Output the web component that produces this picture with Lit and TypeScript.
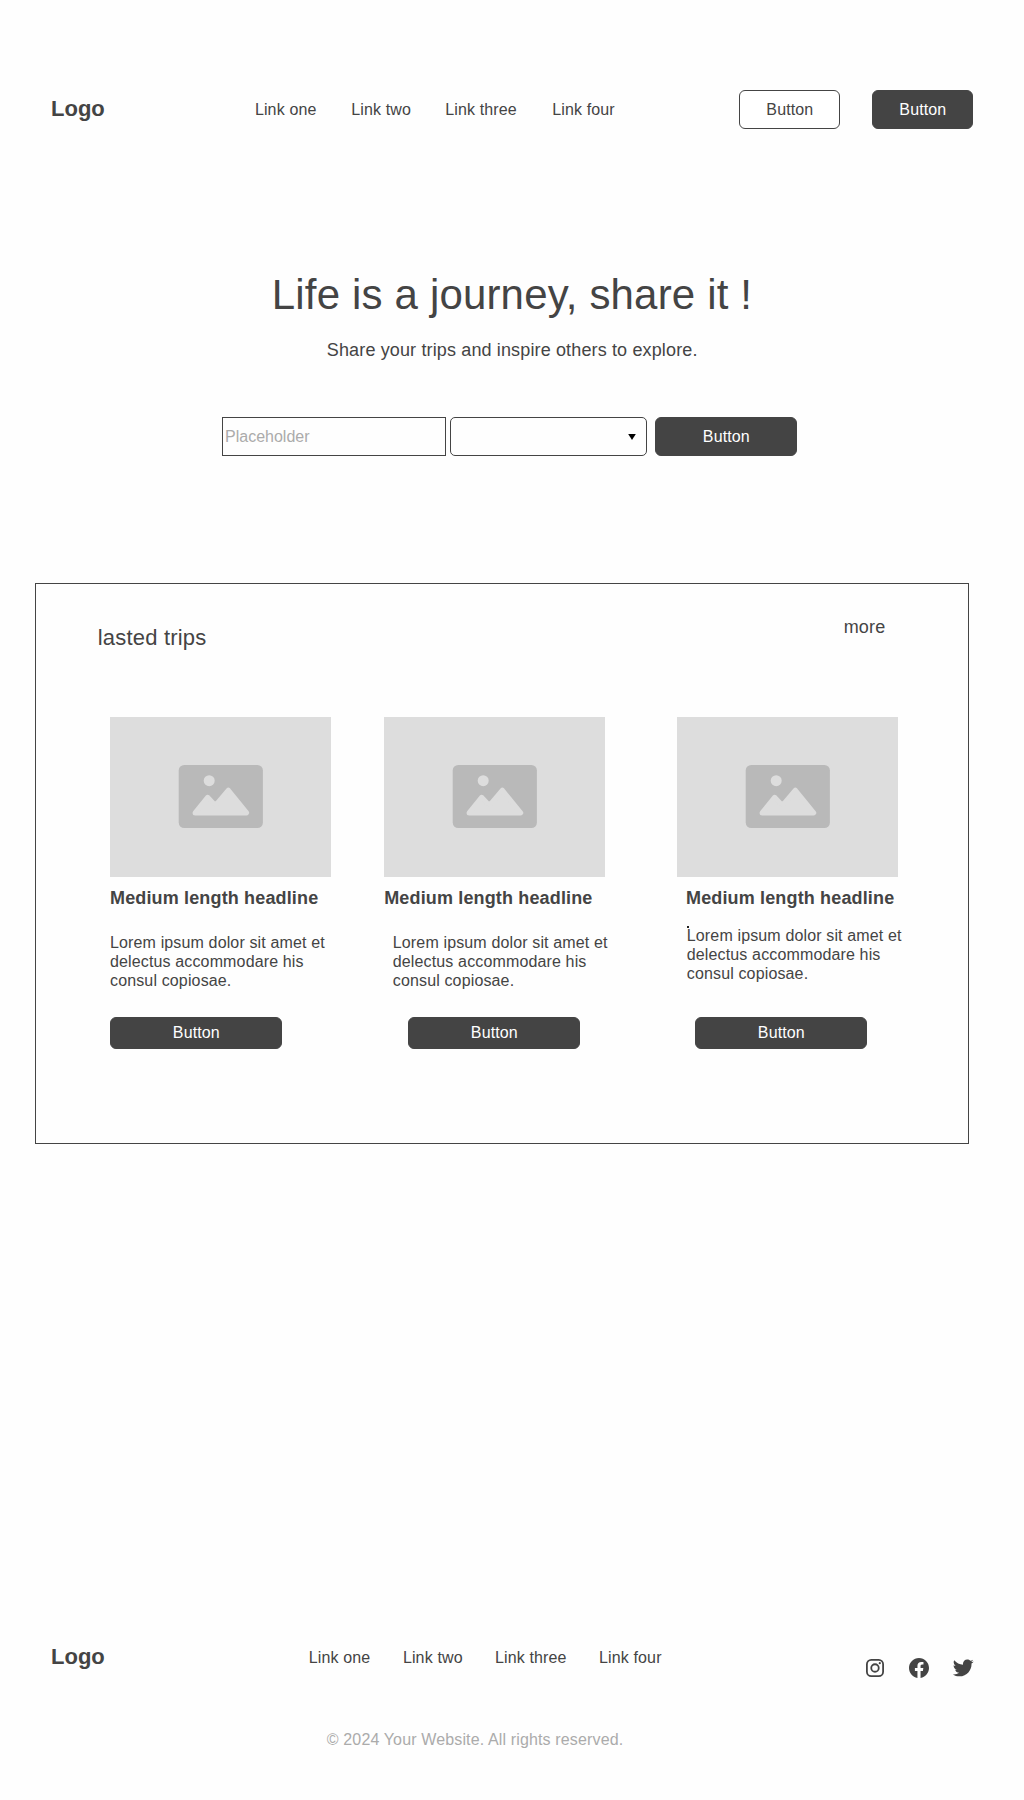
import { LitElement, html, css, svg } from "lit";
import { customElement, property } from "lit/decorators.js";

const ink = css`#444444`;

@customElement("ui-button")
class UiButton extends LitElement {
  @property({ reflect: true }) variant = "solid";

  static styles = css`
    :host { display: block; height: 39px; }
    .btn {
      box-sizing: border-box;
      width: 100%;
      height: 100%;
      display: flex;
      align-items: center;
      justify-content: center;
      margin: 0;
      padding: 0 0 0 0.6px;
      border: 1px solid ${ink};
      border-radius: 6px;
      background: ${ink};
      color: #fff;
      font: 16px/17px "Liberation Sans", Arial, sans-serif;
      letter-spacing: 0.1px;
    }
    :host([variant="outline"]) .btn { background: #fff; color: ${ink}; }
    :host([variant="compact"]) { height: 32px; }
    :host([variant="compact"]) .btn { padding-bottom: 1px; }
  `;

  render() {
    return html`<button class="btn"><slot></slot></button>`;
  }
}

@customElement("image-placeholder")
class ImagePlaceholder extends LitElement {
  static styles = css`
    :host {
      display: flex;
      align-items: center;
      justify-content: center;
      width: 221px;
      height: 160px;
      background: #dddddd;
    }
    .glyph { display: block; width: 85px; height: 63px; margin-top: -1px; }
    .frame { fill: #b9b9b9; }
    .shape { fill: #dddddd; stroke: #dddddd; stroke-width: 5; stroke-linejoin: round; }
    .sun { fill: #dddddd; }
  `;

  render() {
    return html`<svg class="glyph" viewBox="-0.4 0 85 63">
      ${svg`
        <rect class="frame" x="0.3" y="0" width="84.2" height="63" rx="5.5"></rect>
        <circle class="sun" cx="30.8" cy="15.7" r="5.5"></circle>
        <path class="shape" d="M16.7 47.9 L29.2 32.3 L34.8 38.3 Q36.8 39.3 38.8 38.3 L50 25.2 L68.3 47.9 Z"></path>
      `}
    </svg>`;
  }
}

interface Trip {
  kind: string;
  title: string;
  text: string;
}

const trips: Trip[] = ["first", "second", "third"].map((kind) => ({
  kind,
  title: "Medium length headline",
  text: "Lorem ipsum dolor sit amet et delectus accommodare his consul copiosae.",
}));

const links = ["Link one", "Link two", "Link three", "Link four"];

@customElement("app-root")
class AppRoot extends LitElement {
  static styles = css`
    :host {
      display: block;
      box-sizing: border-box;
      width: 1024px;
      height: 1800px;
      overflow: hidden;
      background: #fefefe;
      color: ${ink};
      font: 16px/19px "Liberation Sans", Arial, sans-serif;
      letter-spacing: 0.14px;
    }
    h1, h2, h3, p { margin: 0; font-weight: normal; }
    a { color: inherit; text-decoration: none; }

    .header { display: flex; align-items: flex-start; padding: 90px 51px 0 51px; height: 39px; }
    .logo { font-size: 22px; line-height: 25px; font-weight: bold; letter-spacing: 0; }
    .header .logo { width: 203.9px; margin-top: 6px; }
    .nav { display: grid; }
    .header .nav { grid-template-columns: 96.3px 94px 107px auto; margin-top: 10px; }
    .actions { display: flex; gap: 32px; margin-left: auto; }
    .actions ui-button { width: 101px; }

    .hero { padding-top: 142px; }
    .title { font-size: 42px; line-height: 47px; letter-spacing: 0.17px; padding-left: 271.8px; white-space: nowrap; }
    .subtitle { font-size: 18px; line-height: 20px; padding: 22px 0 0 326.8px; letter-spacing: 0.14px; white-space: nowrap; }
    .search { display: flex; height: 39px; margin: 57px 0 0 222px; }
    .input {
      box-sizing: border-box;
      width: 224px;
      height: 39px;
      padding: 0 2px 0 2px;
      border: 1px solid ${ink};
      border-radius: 0;
      background: #fefefe;
      font: inherit;
      letter-spacing: 0;
    }
    .input::placeholder { color: #ababab; opacity: 1; }
    .select {
      box-sizing: border-box;
      display: flex;
      align-items: center;
      justify-content: flex-end;
      width: 197px;
      margin: 0 8px 0 4px;
      padding-right: 10px;
      border: 1px solid ${ink};
      border-radius: 5px;
      background: #fefefe;
    }
    .caret { display: block; width: 8px; height: 6px; }
    .search ui-button { width: 142px; }

    .panel {
      box-sizing: border-box;
      width: 934px;
      height: 561px;
      margin: 127px 0 0 35px;
      border: 1px solid ${ink};
    }
    .panel-head { display: flex; justify-content: space-between; align-items: flex-start; padding: 33px 82.7px 0 61.7px; height: 100px; }
    .panel-title { font-size: 22px; line-height: 25px; margin-top: 8px; letter-spacing: 0.2px; }
    .more { font-size: 18px; line-height: 20px; }
    .trips { display: grid; grid-template-columns: 274px 293px auto; padding-left: 74px; }
    .trip { display: flex; flex-direction: column; align-items: flex-start; width: 232px; }
    .trip-title { font-size: 18px; line-height: 20px; font-weight: bold; margin: 11px 0 0; white-space: nowrap; letter-spacing: 0.15px; }
    .trip-text { width: 222px; height: 57px; margin: 25px 0 27px; }
    .trip ui-button { width: 172px; }
    .second .trip-title { margin-left: 0.2px; }
    .second .trip-text { margin-left: 8.8px; }
    .second ui-button { margin-left: 24px; }
    .third .trip-title { margin-left: 9px; }
    .third .dot { width: 2px; height: 2px; margin: 18px 0 -2px 10px; background: #222; }
    .third .trip-text { margin: 0 0 34px 9.8px; }
    .third ui-button { margin-left: 18px; }

    .footer { display: flex; align-items: flex-start; padding: 500px 49px 0 51px; }
    .footer .logo { width: 257.8px; }
    .footer .nav { grid-template-columns: 94.1px 92.1px 104px auto; margin-top: 4px; }
    .social { display: flex; gap: 20px; margin: 12px 0 0 auto; }
    .icon { display: block; width: 24px; height: 24px; fill: ${ink}; }
    .line { fill: none; stroke: ${ink}; stroke-width: 1.8; }
    .copyright { padding: 50px 0 0 326.8px; color: #ababab; white-space: nowrap; }
  `;

  private nav() {
    return html`<nav class="nav">${links.map((l) => html`<a>${l}</a>`)}</nav>`;
  }

  private trip(t: Trip) {
    return html`<article class="trip ${t.kind}">
      <image-placeholder></image-placeholder>
      <h3 class="trip-title">${t.title}</h3>
      ${t.kind === "third" ? html`<div class="dot"></div>` : ""}
      <p class="trip-text">${t.text}</p>
      <ui-button variant="compact">Button</ui-button>
    </article>`;
  }

  render() {
    return html`
      <header class="header">
        <div class="logo">Logo</div>
        ${this.nav()}
        <div class="actions">
          <ui-button variant="outline">Button</ui-button>
          <ui-button>Button</ui-button>
        </div>
      </header>

      <section class="hero">
        <h1 class="title">Life is a journey, share it !</h1>
        <p class="subtitle">Share your trips and inspire others to explore.</p>
        <div class="search">
          <input class="input" placeholder="Placeholder" />
          <div class="select">
            <svg class="caret" viewBox="0 0 8 6"><path d="M0.2 0h7.6L4 6z"></path></svg>
          </div>
          <ui-button>Button</ui-button>
        </div>
      </section>

      <section class="panel">
        <div class="panel-head">
          <h2 class="panel-title">lasted trips</h2>
          <a class="more">more</a>
        </div>
        <div class="trips">${trips.map((t) => this.trip(t))}</div>
      </section>

      <footer class="footer">
        <div class="logo">Logo</div>
        ${this.nav()}
        <div class="social">
          <svg class="icon" viewBox="0 0 24 24">
            <rect class="line" x="3.9" y="3.9" width="16.2" height="16.2" rx="4.4"></rect>
            <circle class="line" cx="12" cy="12" r="3.75"></circle>
            <circle cx="16.8" cy="7.2" r="1.1"></circle>
          </svg>
          <svg class="icon" viewBox="0 0 24 24">
            <path d="M12.001 2.002c-5.522 0-9.999 4.477-9.999 9.999 0 4.99 3.656 9.126 8.437 9.879v-6.988h-2.54v-2.891h2.54V9.798c0-2.508 1.493-3.891 3.776-3.891 1.094 0 2.24.195 2.24.195v2.459h-1.264c-1.24 0-1.628.772-1.628 1.563v1.875h2.771l-.443 2.891h-2.328v6.988C18.344 21.129 22 16.992 22 12.001c0-5.522-4.477-9.999-9.999-9.999z"></path>
          </svg>
          <svg class="icon" viewBox="0.32 0.84 22.6 22.6">
            <path d="M19.633 7.997c.013.175.013.349.013.523 0 5.325-4.053 11.461-11.46 11.461-2.282 0-4.402-.661-6.186-1.809.324.037.636.05.973.05a8.07 8.07 0 0 0 5.001-1.721 4.036 4.036 0 0 1-3.767-2.793c.249.037.499.062.761.062.361 0 .724-.05 1.061-.137a4.027 4.027 0 0 1-3.23-3.953v-.05c.537.299 1.16.486 1.82.511a4.022 4.022 0 0 1-1.796-3.354c0-.748.199-1.434.548-2.032a11.457 11.457 0 0 0 8.306 4.215c-.062-.3-.1-.611-.1-.923a4.026 4.026 0 0 1 4.028-4.028c1.16 0 2.207.486 2.943 1.272a7.957 7.957 0 0 0 2.556-.973 4.02 4.02 0 0 1-1.771 2.22 8.073 8.073 0 0 0 2.319-.624 8.645 8.645 0 0 1-2.019 2.083z"></path>
          </svg>
        </div>
      </footer>
      <p class="copyright">© 2024 Your Website. All rights reserved.</p>
    `;
  }
}
